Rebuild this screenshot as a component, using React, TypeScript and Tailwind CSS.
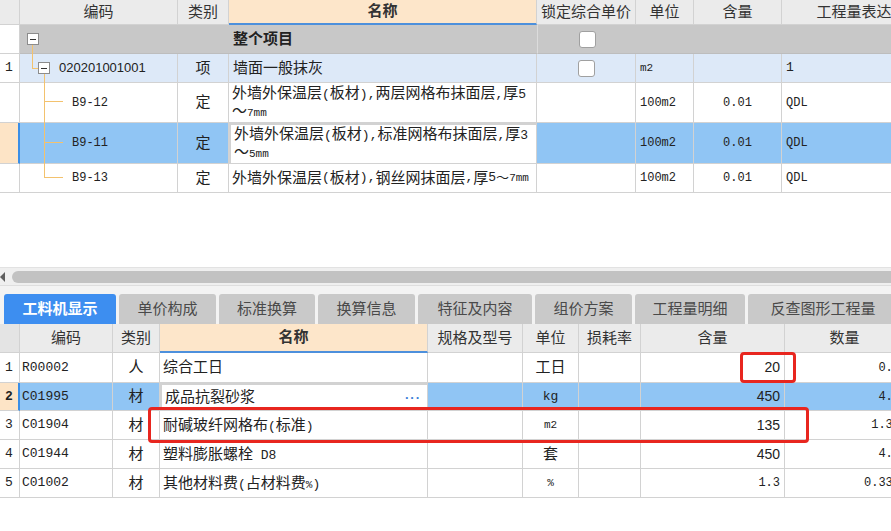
import React from "react";

const SANS = "font-['Liberation_Sans','Noto_Sans_CJK_SC',sans-serif]";
const MONO = "font-['Liberation_Mono','Noto_Sans_CJK_SC',monospace]";

// ASCII runs inside Chinese text are drawn a little smaller, like the half-width glyphs of the source font
const fmt = (s: string) =>
  s.split(/([\x20-\x7e]+)/).map((part, i) =>
    /^[\x20-\x7e]+$/.test(part) ? (
      <span key={i} className={`text-[13px] ${MONO}`}>
        {part}
      </span>
    ) : (
      <span key={i}>{part}</span>
    )
  );

const Cell = ({ className = "", children }: { className?: string; children?: React.ReactNode }) => (
  <div className={`flex shrink-0 items-center border-r border-b border-[#d2d2d2] ${className}`}>{children}</div>
);

const MinusBox = () => (
  <div className="flex h-[12px] w-[12px] shrink-0 items-center justify-center border border-[#8c8c8c] bg-white">
    <div className="h-[1px] w-[6px] bg-[#333]" />
  </div>
);

const CheckBox = () => (
  <div className="h-[17px] w-[17px] rounded-[3px] border border-[#a0a0a0] bg-white" />
);

const quotaRows = [
  { code: "B9-12", line1: "外墙外保温层(板材),两层网格布抹面层,厚5", line2: "～7mm", h: "h-[40px]", selected: false },
  { code: "B9-11", line1: "外墙外保温层(板材),标准网格布抹面层,厚3", line2: "～5mm", h: "h-[41px]", selected: true },
];

const TopTable = () => (
  <div className="relative h-[267px] overflow-hidden bg-white">
    <div className="w-[942px] text-[15px] text-[#222]">
      {/* header */}
      <div className="flex h-[25px] bg-[#ebebeb] text-[#333]">
        <Cell className="w-[20px] border-[#c8c8c8]" />
        <Cell className="w-[158px] justify-center border-[#c8c8c8]">编码</Cell>
        <Cell className="w-[51px] justify-center border-[#c8c8c8]">类别</Cell>
        <Cell className="w-[308px] justify-center border-[#c8c8c8] border-b-2 border-b-[#4d90dc] bg-[#fde6ca] font-bold">名称</Cell>
        <Cell className="w-[99px] justify-center border-[#c8c8c8]">锁定综合单价</Cell>
        <Cell className="w-[58px] justify-center border-[#c8c8c8]">单位</Cell>
        <Cell className="w-[88px] justify-center border-[#c8c8c8]">含量</Cell>
        <Cell className="w-[160px] justify-center border-[#c8c8c8]">工程量表达式</Cell>
      </div>

      {/* whole project */}
      <div className="flex h-[29px]">
        <Cell className="w-[20px] bg-white" />
        <div className="flex w-[209px] shrink-0 items-center border-b border-[#bdbdbd] bg-[#c8c8c8] pl-[7px]">
          <MinusBox />
        </div>
        <div className="flex w-[308px] shrink-0 items-center border-b border-[#bdbdbd] bg-[#c8c8c8] pl-[4px] font-bold">
          整个项目
        </div>
        <div className="flex w-[99px] shrink-0 items-center justify-center border-b border-l border-[#bdbdbd] border-l-[#dcdcdc] bg-[#c8c8c8]">
          <CheckBox />
        </div>
        <div className="w-[306px] shrink-0 border-b border-[#bdbdbd] bg-[#c8c8c8]" />
      </div>

      {/* list item */}
      <div className="flex h-[29px]">
        <Cell className={`w-[20px] bg-white pl-[5px] text-[13px] ${MONO}`}>1</Cell>
        <Cell className="w-[158px] gap-[9px] bg-[#dde9f8] pl-[18px]">
          <MinusBox />
          <span className={`text-[13px] ${SANS}`}>020201001001</span>
        </Cell>
        <Cell className="w-[51px] justify-center bg-[#dde9f8]">项</Cell>
        <Cell className="w-[308px] bg-[#dde9f8] pl-[4px]">墙面一般抹灰</Cell>
        <Cell className="w-[99px] justify-center bg-[#dde9f8]">
          <CheckBox />
        </Cell>
        <Cell className={`w-[58px] bg-[#dde9f8] pl-[4px] text-[11px] ${MONO}`}>m2</Cell>
        <Cell className="w-[88px] bg-[#dde9f8]" />
        <Cell className={`w-[160px] bg-[#dde9f8] pl-[4px] text-[13px] ${MONO}`}>1</Cell>
      </div>

      {quotaRows.map((r) => (
        <div key={r.code} className={`flex ${r.h}`}>
          <Cell className={`w-[20px] ${r.selected ? "border-r-2 border-r-[#3a8ee6] bg-[#fde4c6]" : "bg-white"}`} />
          <Cell className={`w-[158px] pl-[52px] text-[12px] ${MONO} ${r.selected ? "bg-[#90c5f4]" : ""}`}>{r.code}</Cell>
          <Cell className={`w-[51px] justify-center ${r.selected ? "bg-[#90c5f4]" : ""}`}>定</Cell>
          <Cell
            className={`w-[308px] overflow-hidden whitespace-nowrap pl-[3px] leading-[16px] ${
              r.selected ? "border-2 border-[#727272] bg-white" : ""
            }`}
          >
            <div>
              <div>{fmt(r.line1)}</div>
              <div>
                ～<span className={`text-[11px] ${MONO}`}>{r.line2.slice(1)}</span>
              </div>
            </div>
          </Cell>
          <Cell className={`w-[99px] ${r.selected ? "bg-[#90c5f4]" : ""}`} />
          <Cell className={`w-[58px] pl-[4px] text-[12px] ${MONO} ${r.selected ? "bg-[#90c5f4]" : ""}`}>100m2</Cell>
          <Cell className={`w-[88px] justify-center text-[12px] ${MONO} ${r.selected ? "bg-[#90c5f4]" : ""}`}>0.01</Cell>
          <Cell className={`w-[160px] pl-[4px] text-[12px] ${MONO} ${r.selected ? "bg-[#90c5f4]" : ""}`}>QDL</Cell>
        </div>
      ))}

      <div className="flex h-[29px]">
        <Cell className="w-[20px] bg-white" />
        <Cell className={`w-[158px] pl-[52px] text-[12px] ${MONO}`}>B9-13</Cell>
        <Cell className="w-[51px] justify-center">定</Cell>
        <Cell className="w-[308px] overflow-hidden whitespace-nowrap pl-[3px]">
          {fmt("外墙外保温层(板材),钢丝网抹面层,厚5")}
          <span className="text-[13px]">～</span>
          <span className={`text-[11px] ${MONO}`}> 7mm</span>
        </Cell>
        <Cell className="w-[99px]" />
        <Cell className={`w-[58px] pl-[4px] text-[12px] ${MONO}`}>100m2</Cell>
        <Cell className={`w-[88px] justify-center text-[12px] ${MONO}`}>0.01</Cell>
        <Cell className={`w-[160px] pl-[4px] text-[12px] ${MONO}`}>QDL</Cell>
      </div>
    </div>

    {/* tree connector lines */}
    <div className="absolute left-[32px] top-[45px] h-[23px] w-[1px] bg-[#f3c26e]" />
    <div className="absolute left-[32px] top-[68px] h-[1px] w-[6px] bg-[#f3c26e]" />
    <div className="absolute left-[44px] top-[74px] h-[104px] w-[1px] bg-[#f3c26e]" />
    <div className="absolute left-[44px] top-[101px] h-[1px] w-[19px] bg-[#f3c26e]" />
    <div className="absolute left-[44px] top-[142px] h-[1px] w-[19px] bg-[#f3c26e]" />
    <div className="absolute left-[44px] top-[177px] h-[1px] w-[19px] bg-[#f3c26e]" />
  </div>
);

const tabs = [
  { label: "工料机显示", w: "w-[112px]", active: true },
  { label: "单价构成", w: "w-[97px]" },
  { label: "标准换算", w: "w-[96px]" },
  { label: "换算信息", w: "w-[97px]" },
  { label: "特征及内容", w: "w-[114px]" },
  { label: "组价方案", w: "w-[97px]" },
  { label: "工程量明细", w: "w-[110px]" },
  { label: "反查图形工程量", w: "w-[150px]" },
];

const materials = [
  { no: "1", code: "R00002", type: "人", name: <>综合工日</>, unit: <span>工日</span>, qty: "20", amount: "0.2", h: "h-[30px]" },
  {
    no: "2",
    code: "C01995",
    type: "材",
    name: <>成品抗裂砂浆</>,
    unit: <span className={`text-[13px] ${MONO}`}>kg</span>,
    qty: "450",
    amount: "4.5",
    h: "h-[28px]",
    selected: true,
  },
  {
    no: "3",
    code: "C01904",
    type: "材",
    name: <>{fmt("耐碱玻纤网格布(标准)")}</>,
    unit: <span className={`text-[11px] ${MONO}`}>m2</span>,
    qty: "135",
    amount: "1.35",
    h: "h-[29px]",
  },
  {
    no: "4",
    code: "C01944",
    type: "材",
    name: <>{fmt("塑料膨胀螺栓 D8")}</>,
    unit: <span>套</span>,
    qty: "450",
    amount: "4.5",
    h: "h-[29px]",
  },
  {
    no: "5",
    code: "C01002",
    type: "材",
    name: (
      <>
        {fmt("其他材料费(占材料费")}
        <span className={`text-[11px] ${MONO}`}>%</span>
        {fmt(")")}
      </>
    ),
    unit: <span className={`text-[11px] ${MONO}`}>%</span>,
    qty: "1.3",
    amount: "0.338",
    h: "h-[29px]",
  },
];

const BottomTable = () => (
  <div className="w-[905px] text-[15px] text-[#222]">
    <div className="flex h-[29px] bg-[#ebebeb] text-[#333]">
      <Cell className="w-[20px] border-[#c8c8c8] bg-[#e4e4e4]" />
      <Cell className="w-[93px] justify-center border-[#c8c8c8]">编码</Cell>
      <Cell className="w-[47px] justify-center border-[#c8c8c8]">类别</Cell>
      <Cell className="w-[268px] justify-center border-[#c8c8c8] border-b-2 border-b-[#4d90dc] bg-[#fde6ca] font-bold">名称</Cell>
      <Cell className="w-[95px] justify-center border-[#c8c8c8]">规格及型号</Cell>
      <Cell className="w-[56px] justify-center border-[#c8c8c8]">单位</Cell>
      <Cell className="w-[62px] justify-center border-[#c8c8c8]">损耗率</Cell>
      <Cell className="w-[144px] justify-center border-[#c8c8c8]">含量</Cell>
      <Cell className="w-[120px] justify-center border-[#c8c8c8]">数量</Cell>
    </div>
    {materials.map((m) => {
      const sel = m.selected ? "bg-[#90c5f4]" : "bg-white";
      return (
        <div key={m.no} className={`flex ${m.h}`}>
          <Cell
            className={`w-[20px] pl-[5px] text-[13px] ${MONO} ${
              m.selected ? "border-r-2 border-r-[#3a8ee6] bg-[#fde4c6] font-bold" : "bg-white"
            }`}
          >
            {m.no}
          </Cell>
          <Cell className={`w-[93px] pl-[2px] text-[13px] ${MONO} ${sel}`}>{m.code}</Cell>
          <Cell className={`w-[47px] justify-center ${sel}`}>{m.type}</Cell>
          <Cell
            className={`w-[268px] justify-between whitespace-nowrap pl-[3px] pr-[6px] ${
              m.selected ? "border-2 border-[#707070] bg-white" : "bg-white"
            }`}
          >
            <span>{m.name}</span>
            {m.selected && <span className={`text-[13px] font-bold tracking-[1px] text-[#3d7fd8] ${SANS}`}>···</span>}
          </Cell>
          <Cell className={`w-[95px] ${sel}`} />
          <Cell className={`w-[56px] justify-center ${sel}`}>{m.unit}</Cell>
          <Cell className={`w-[62px] ${sel}`} />
          <Cell className={`w-[144px] justify-end pr-[4px] ${m.no === "5" ? `text-[12px] ${MONO}` : `text-[14px] ${SANS}`} ${sel}`}>
            {m.qty}
          </Cell>
          <Cell className={`w-[120px] justify-end pr-[4px] text-[12px] ${MONO} ${sel}`}>{m.amount}</Cell>
        </div>
      );
    })}
  </div>
);

const App = () => {
  return (
    <div className={`relative h-[531px] w-[891px] overflow-hidden bg-white ${SANS}`}>
      <TopTable />

      {/* horizontal scrollbar */}
      <div className="flex h-[18px] items-center border-t border-[#e2e2e2] bg-[#efefef]">
        <div className="h-0 w-0 border-y-[5px] border-r-[5px] border-y-transparent border-r-[#5f5f5f]" />
        <div className="ml-[7px] h-[12px] flex-1 rounded-l-full bg-[#c2c2c2]" />
      </div>

      {/* tab strip */}
      <div className="flex h-[39px] items-end gap-[3px] border-t border-[#dedede] bg-[#f3f3f3] pl-[4px]">
        {tabs.map((t) => (
          <div
            key={t.label}
            className={`flex h-[30px] shrink-0 items-center justify-center rounded-t-[3px] text-[15px] ${t.w} ${
              t.active ? "bg-[#3d8ef0] font-bold text-white" : "bg-[#c9c9c9] text-[#4a4a4a]"
            }`}
          >
            {t.label}
          </div>
        ))}
      </div>

      <BottomTable />

      {/* red highlight boxes */}
      <div className="absolute left-[740px] top-[352px] h-[31px] w-[56px] rounded-[4px] border-[3px] border-[#e8261f]" />
      <div className="absolute left-[148px] top-[407px] h-[36px] w-[661px] rounded-[4px] border-[3px] border-[#e8261f]" />
    </div>
  );
};

export default App;
